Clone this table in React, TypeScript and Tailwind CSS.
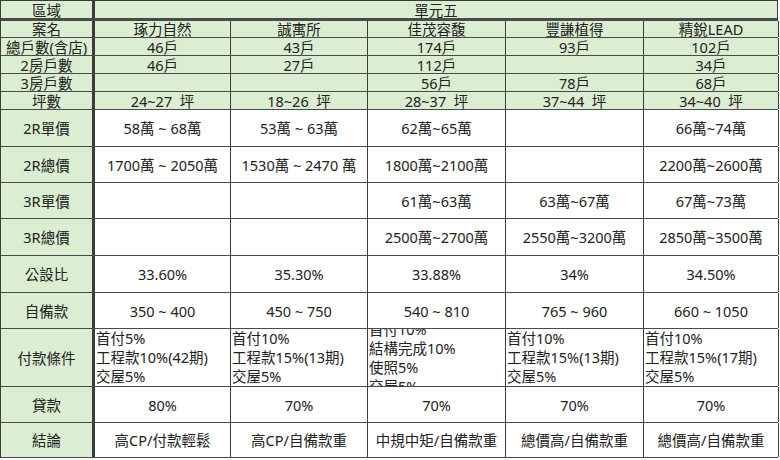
import React from 'react';

// column widths include the right border line
const colW = ['w-[94px]', 'w-[136px]', 'w-[137px]', 'w-[138px]', 'w-[138px]', 'w-[135px]'];

type Row = {
  label: string;
  cells: string[];
  h: string;
  green?: boolean;
  lines?: boolean;
};

const rows: Row[] = [
  { label: '案名', cells: ['琢力自然', '誠寓所', '佳茂容馥', '豐謙植得', '精銳LEAD'], h: 'h-[17px]', green: true },
  { label: '總戶數(含店)', cells: ['46戶', '43戶', '174戶', '93戶', '102戶'], h: 'h-[18px]', green: true },
  { label: '2房戶數', cells: ['46戶', '27戶', '112戶', '', '34戶'], h: 'h-[18px]', green: true },
  { label: '3房戶數', cells: ['', '', '56戶', '78戶', '68戶'], h: 'h-[18px]', green: true },
  { label: '坪數', cells: ['24~27  坪', '18~26  坪', '28~37  坪', '37~44  坪', '34~40  坪'], h: 'h-[18px]', green: true },
  { label: '2R單價', cells: ['58萬 ~ 68萬', '53萬 ~ 63萬', '62萬~65萬', '', '66萬~74萬'], h: 'h-[37px]' },
  { label: '2R總價', cells: ['1700萬 ~ 2050萬', '1530萬 ~ 2470 萬', '1800萬~2100萬', '', '2200萬~2600萬'], h: 'h-[36px]' },
  { label: '3R單價', cells: ['', '', '61萬~63萬', '63萬~67萬', '67萬~73萬'], h: 'h-[36px]' },
  { label: '3R總價', cells: ['', '', '2500萬~2700萬', '2550萬~3200萬', '2850萬~3500萬'], h: 'h-[37px]' },
  { label: '公設比', cells: ['33.60%', '35.30%', '33.88%', '34%', '34.50%'], h: 'h-[37px]' },
  { label: '自備款', cells: ['350 ~ 400', '450 ~ 750', '540 ~ 810', '765 ~ 960', '660 ~ 1050'], h: 'h-[36px]' },
  {
    label: '付款條件',
    cells: [
      '首付5%\n工程款10%(42期)\n交屋5%',
      '首付10%\n工程款15%(13期)\n交屋5%',
      '首付10%\n結構完成10%\n使照5%\n交屋5%',
      '首付10%\n工程款15%(13期)\n交屋5%',
      '首付10%\n工程款15%(17期)\n交屋5%',
    ],
    h: 'h-[58px]',
    lines: true,
  },
  { label: '貸款', cells: ['80%', '70%', '70%', '70%', '70%'], h: 'h-[36px]' },
  { label: '結論', cells: ['高CP/付款輕鬆', '高CP/自備款重', '中規中矩/自備款重', '總價高/自備款重', '總價高/自備款重'], h: 'h-[35px]' },
];

const App = () => {
  return (
    <div
      className="w-[780px] h-[460px] bg-white text-[#222] text-[14.5px] overflow-hidden"
      style={{ fontFamily: '"Noto Sans", "Noto Sans CJK TC", sans-serif' }}
    >
      <div className="w-[778px] border-t border-l border-[#3c3c3c]">
        {/* region header */}
        <div className="flex h-[20px] bg-[#dbeed2] border-b-[3px] border-[#4a4a4a]">
          <div className="w-[94px] border-r-[3px] border-[#3c3c3c] flex items-center justify-center">
            <div className="leading-[16px]">區域</div>
          </div>
          <div className="flex-1 border-r border-[#3c3c3c] flex items-center justify-center">
            <div className="leading-[16px]">單元五</div>
          </div>
        </div>
        {rows.map((row) => (
          <div
            key={row.label}
            className={`flex ${row.h} border-b border-[#4a4a4a] ${row.green ? 'bg-[#dbeed2]' : 'bg-white'}`}
          >
            <div className="w-[94px] shrink-0 bg-[#dbeed2] border-r-[3px] border-[#3c3c3c] flex items-center justify-center whitespace-nowrap">
              <div className="leading-[16px]">{row.label}</div>
            </div>
            {row.cells.map((c, i) => (
              <div
                key={i}
                className={`${colW[i + 1]} shrink-0 border-r border-[#3c3c3c] flex items-center ${
                  row.lines ? 'justify-start pl-[1px] overflow-hidden' : 'justify-center'
                }`}
              >
                {row.lines ? (
                  <div className="leading-[19px]">
                    {c.split('\n').map((l) => (
                      <div key={l}>{l}</div>
                    ))}
                  </div>
                ) : (
                  <div className="leading-[16px] whitespace-pre">{c}</div>
                )}
              </div>
            ))}
          </div>
        ))}
      </div>
    </div>
  );
};

export default App;
